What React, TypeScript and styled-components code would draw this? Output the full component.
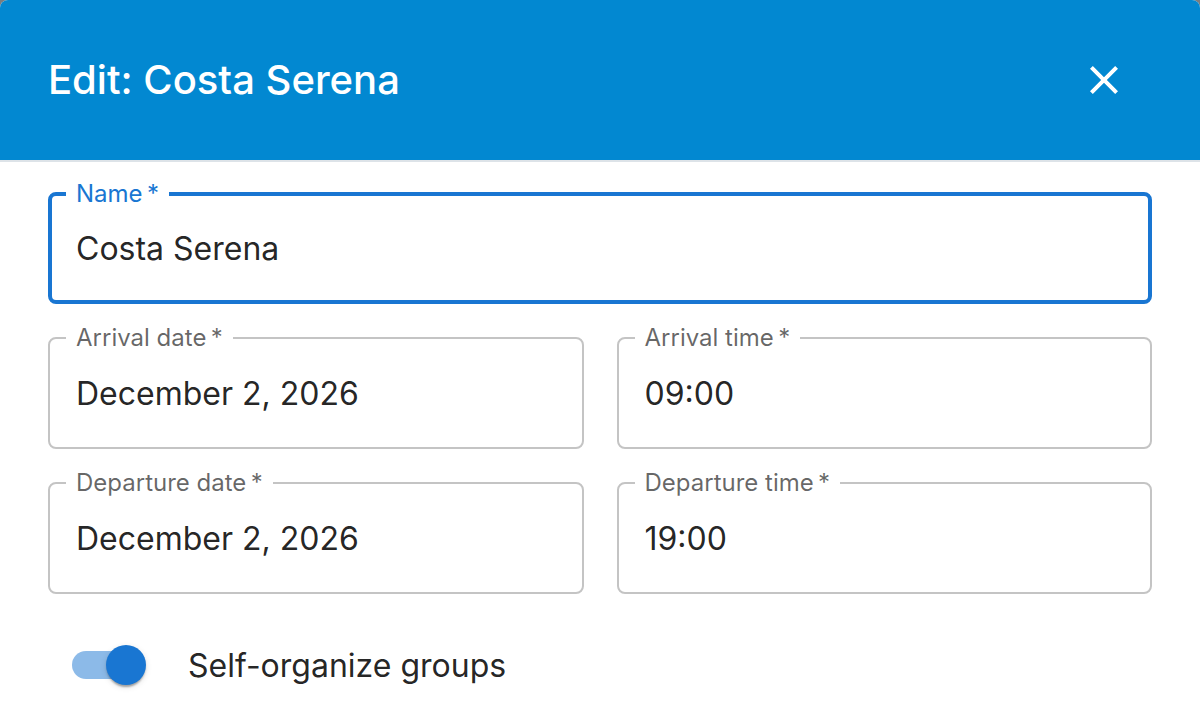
import React from "react";
import styled, { createGlobalStyle } from "styled-components";

const GlobalStyle = createGlobalStyle`
  html, body {
    margin: 0;
    padding: 0;
    background: #7d7d7d;
  }
  body {
    font-family: Inter, "Noto Sans", "Liberation Sans", sans-serif;
    -webkit-font-smoothing: antialiased;
  }
  * { box-sizing: border-box; }
`;

const Dialog = styled.div`
  width: 1200px;
  height: 714px;
  background: #ffffff;
  border-radius: 8px 8px 0 0;
  overflow: hidden;
  display: flex;
  flex-direction: column;
`;

const Header = styled.header`
  height: 162px;
  flex: none;
  background: #0288d1;
  border-bottom: 2px solid #dde3e8;
  display: flex;
  align-items: center;
  justify-content: space-between;
  padding: 0 72px 0 48px;
`;

const Title = styled.h2`
  margin: 0;
  color: #ffffff;
  font-size: 40px;
  font-weight: 500;
  line-height: 1;
  letter-spacing: 0;
`;

const CloseButton = styled.button`
  border: 0;
  padding: 0;
  margin: 0;
  background: transparent;
  width: 48px;
  height: 48px;
  display: flex;
  align-items: center;
  justify-content: center;
  color: #ffffff;
  cursor: pointer;
`;

const Content = styled.div`
  padding: 30px 48px 0;
  display: flex;
  flex-direction: column;
  gap: 33px;
`;

const Grid = styled.div`
  display: grid;
  grid-template-columns: 1fr 1fr;
  column-gap: 33px;
  row-gap: 33px;
`;

const FieldBox = styled.div<{ $focused?: boolean }>`
  position: relative;
  height: 112px;
  border: ${(p) => (p.$focused ? "4px solid #1976d2" : "2px solid #c4c4c4")};
  border-radius: 8px;
  padding-left: ${(p) => (p.$focused ? "24px" : "26px")};
  padding-top: 1px;
  display: flex;
  align-items: center;
`;

const FieldLabel = styled.span<{ $focused?: boolean }>`
  position: absolute;
  top: ${(p) => (p.$focused ? "-14px" : "-13px")};
  left: ${(p) => (p.$focused ? "14px" : "16px")};
  padding: 0 10px;
  background: #ffffff;
  font-size: 24px;
  line-height: 24px;
  font-weight: 400;
  color: ${(p) => (p.$focused ? "#1976d2" : "rgba(0,0,0,0.6)")};
  white-space: nowrap;
`;

const FieldValue = styled.span`
  font-size: 32px;
  line-height: 1;
  color: rgba(0, 0, 0, 0.87);
`;

const SwitchRow = styled.label`
  display: flex;
  align-items: center;
`;

const SwitchRoot = styled.span`
  position: relative;
  width: 116px;
  height: 76px;
  flex: none;
`;

const Track = styled.span`
  position: absolute;
  left: 24px;
  top: 24px;
  width: 68px;
  height: 28px;
  border-radius: 14px;
  background: #1976d2;
  opacity: 0.5;
`;

const Thumb = styled.span`
  position: absolute;
  left: 58px;
  top: 18px;
  width: 40px;
  height: 40px;
  border-radius: 50%;
  background: #1976d2;
  box-shadow: 0 4px 2px -2px rgba(0, 0, 0, 0.2), 0 2px 2px 0 rgba(0, 0, 0, 0.14),
    0 2px 6px 0 rgba(0, 0, 0, 0.12);
`;

const SwitchLabel = styled.span`
  margin-left: 24px;
  padding-top: 2px;
  font-size: 32px;
  line-height: 1;
  color: rgba(0, 0, 0, 0.87);
`;

type FieldProps = { label: string; value: string; focused?: boolean };

const Field: React.FC<FieldProps> = ({ label, value, focused }) => (
  <FieldBox $focused={focused}>
    <FieldLabel $focused={focused}>{label}{"\u2009*"}</FieldLabel>
    <FieldValue>{value}</FieldValue>
  </FieldBox>
);

export default function App() {
  return (
    <>
      <GlobalStyle />
      <Dialog>
        <Header>
          <Title>Edit: Costa Serena</Title>
          <CloseButton aria-label="close">
            <svg width="50" height="50" viewBox="0 0 24 24" fill="currentColor">
              <path d="M19 6.41 17.59 5 12 10.59 6.41 5 5 6.41 10.59 12 5 17.59 6.41 19 12 13.41 17.59 19 19 17.59 13.41 12z" />
            </svg>
          </CloseButton>
        </Header>
        <Content>
          <Field label="Name" value="Costa Serena" focused />
          <Grid>
            <Field label="Arrival date" value="December 2, 2026" />
            <Field label="Arrival time" value="09:00" />
            <Field label="Departure date" value="December 2, 2026" />
            <Field label="Departure time" value="19:00" />
          </Grid>
          <SwitchRow>
            <SwitchRoot>
              <Track />
              <Thumb />
            </SwitchRoot>
            <SwitchLabel>Self-organize groups</SwitchLabel>
          </SwitchRow>
        </Content>
      </Dialog>
    </>
  );
}
